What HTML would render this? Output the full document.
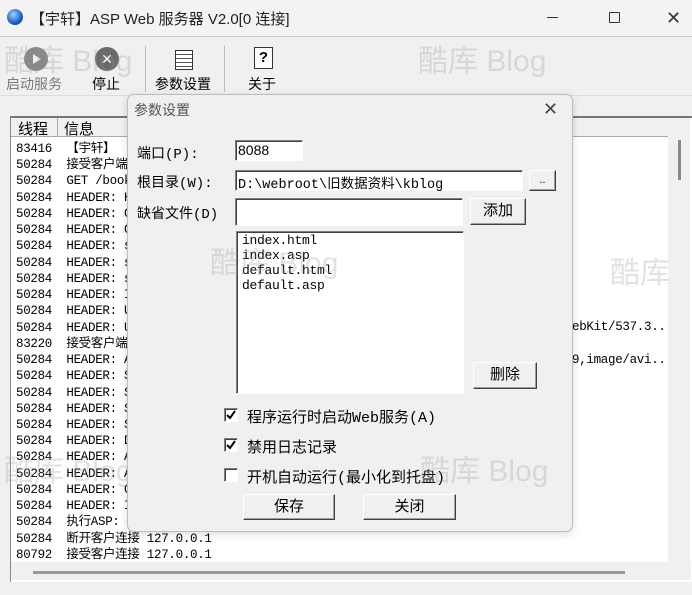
<!DOCTYPE html>
<html><head><meta charset="utf-8"><style>
*{margin:0;padding:0;box-sizing:border-box}
body{width:692px;height:595px;overflow:hidden;background:#f0f0f0;font-family:"Liberation Sans","Noto Sans CJK SC",sans-serif;position:relative;color:#000}
.a{position:absolute}
.tb{font-size:14px;white-space:nowrap}
.log{font-family:"Liberation Mono","Noto Sans CJK SC",monospace;font-size:12.5px;line-height:16.24px;white-space:pre;letter-spacing:-0.3px}
.btn{position:absolute;background:#f0f0f0;border:1px solid;border-color:#fff #404040 #404040 #fff;box-shadow:inset -1px -1px 0 #a0a0a0;font-size:14px;text-align:center}
.inp{position:absolute;background:#fff;border:1px solid;border-color:#808080 #fff #fff #808080;box-shadow:inset 1px 1px 0 #404040}
.lbl{position:absolute;font-size:14px;white-space:nowrap;font-family:"Liberation Mono","Noto Sans CJK SC",monospace}
.cb{position:absolute;width:14px;height:14px;background:#fff;border:1px solid;border-color:#808080 #fff #fff #808080;box-shadow:inset 1px 1px 0 #404040}
.wm{position:absolute;color:rgba(150,150,150,0.28);font-size:30px;white-space:nowrap}
</style></head><body>
<div class="a" style="left:0;top:0;width:692px;height:37px;background:#f3f3f3;border-bottom:1px solid #c8c8c8"></div>
<div class="a" style="left:7px;top:9px;width:16px;height:16px;border-radius:50%;background:radial-gradient(circle at 40% 35%,#9fd0ff,#1a5fc0 60%,#0a2a70)"></div>
<div class="a tb" style="left:30px;top:8px;font-size:15px;color:#222">【宇轩】ASP Web 服务器 V2.0[0 连接]</div>
<div class="a" style="left:547px;top:17px;width:11px;height:1px;background:#333"></div>
<div class="a" style="left:609px;top:12px;width:11px;height:11px;border:1px solid #333;border-radius:1px"></div>
<div class="a" style="left:666px;top:8px;font-size:18px;color:#333">✕</div>
<div class="a" style="left:24px;top:47px;width:24px;height:24px;border-radius:50%;background:#888"></div>
<div class="a" style="left:33px;top:54px;width:0;height:0;border-left:8px solid #eee;border-top:5px solid transparent;border-bottom:5px solid transparent"></div>
<div class="a tb" style="left:6px;top:74px;color:#7a7a7a">启动服务</div>
<div class="a" style="left:95px;top:47px;width:24px;height:24px;border-radius:50%;background:#6a6a6a;color:#fff;font-size:14px;text-align:center;line-height:24px">✕</div>
<div class="a tb" style="left:92px;top:74px">停止</div>
<div class="a" style="left:145px;top:46px;width:1px;height:46px;background:#bbb"></div>
<div class="a" style="left:175px;top:50px;width:18px;height:20px;border:1px solid #333;background:#fff;background-image:repeating-linear-gradient(#fff 0 3px,#555 3px 4px)"></div>
<div class="a tb" style="left:155px;top:74px">参数设置</div>
<div class="a" style="left:224px;top:46px;width:1px;height:46px;background:#bbb"></div>
<div class="a" style="left:254px;top:47px;width:19px;height:22px;border:1px solid #333;background:#fff;font-size:15px;font-weight:bold;text-align:center;line-height:20px">?</div>
<div class="a tb" style="left:248px;top:74px">关于</div>
<div class="a" style="left:0;top:95px;width:692px;height:1px;background:#ddd"></div>
<div class="a" style="left:10px;top:116px;width:682px;height:466px;border-top:2px solid #777;border-left:1px solid #888;background:#fff"></div>
<div class="a" style="left:11px;top:118px;width:657px;height:19px;background:#f0f0f0;border-bottom:1px solid #aaa"></div>
<div class="a" style="left:57px;top:118px;width:1px;height:19px;background:#aaa"></div>
<div class="a tb" style="left:18px;top:118px;font-size:15px">线程</div>
<div class="a tb" style="left:64px;top:118px;font-size:15px">信息</div>
<div class="a" style="left:668px;top:118px;width:22px;height:462px;background:#f0f0f0"></div>
<div class="a" style="left:678px;top:140px;width:3px;height:40px;background:#888"></div>
<div class="a" style="left:11px;top:562px;width:680px;height:18px;background:#f0f0f0"></div>
<div class="a" style="left:33px;top:571px;width:592px;height:3px;background:#999"></div>
<div class="a log" style="left:16px;top:141px">83416  【宇轩】
50284  接受客户端
50284  GET /book
50284  HEADER: H
50284  HEADER: C
50284  HEADER: C
50284  HEADER: s
50284  HEADER: s
50284  HEADER: s
50284  HEADER: I
50284  HEADER: U
50284  HEADER: U
83220  接受客户端
50284  HEADER: A
50284  HEADER: S
50284  HEADER: S
50284  HEADER: S
50284  HEADER: S
50284  HEADER: D
50284  HEADER: A
50284  HEADER: A
50284  HEADER: C
50284  HEADER: I
50284  执行ASP:
50284  断开客户连接 127.0.0.1
80792  接受客户连接 127.0.0.1</div>
<div class="a log" style="left:572px;top:319px">ebKit/537.3..</div>
<div class="a log" style="left:572px;top:352px">9,image/avi..</div>
<div class="wm" style="left:4px;top:36px">酷库 Blog</div>
<div class="wm" style="left:418px;top:36px">酷库 Blog</div>
<div class="wm" style="left:610px;top:248px">酷库</div>
<div class="wm" style="left:4px;top:446px">酷库 Blog</div>
<div class="a" style="left:127px;top:94px;width:446px;height:438px;background:#f0f0f0;border:1px solid #bdbdbd;border-radius:7px;box-shadow:0 2px 8px rgba(0,0,0,0.15)"></div>
<div class="a tb" style="left:134px;top:100px;color:#555">参数设置</div>
<div class="a" style="left:543px;top:99px;font-size:18px;color:#444">✕</div>
<div class="lbl" style="left:137px;top:143px">端口(P):</div>
<div class="inp" style="left:235px;top:140px;width:68px;height:21px"></div>
<div class="a" style="left:238px;top:142px;font-size:14px">8088</div>
<div class="lbl" style="left:137px;top:172px">根目录(W):</div>
<div class="inp" style="left:235px;top:170px;width:288px;height:21px"></div>
<div class="a lbl" style="left:238px;top:172px;font-size:13.5px">D:\webroot\旧数据资料\kblog</div>
<div class="btn" style="left:529px;top:170px;width:27px;height:21px;font-size:11px;line-height:18px">..</div>
<div class="lbl" style="left:137px;top:203px">缺省文件(D)</div>
<div class="inp" style="left:235px;top:198px;width:228px;height:28px"></div>
<div class="btn" style="left:470px;top:198px;width:56px;height:27px;line-height:24px;font-size:15px">添加</div>
<div class="inp" style="left:236px;top:231px;width:228px;height:163px"></div>
<div class="a log" style="left:242px;top:233px;font-size:13px;line-height:15px">index.html
index.asp
default.html
default.asp</div>
<div class="btn" style="left:473px;top:362px;width:64px;height:27px;line-height:24px;font-size:15px">删除</div>
<div class="cb" style="left:224px;top:408px"><svg width="12" height="12" style="position:absolute;left:0;top:0"><path d="M2 6 L5 9 L10 2" stroke="#000" stroke-width="2" fill="none"/></svg></div>
<div class="lbl" style="left:247px;top:406px;font-size:15px">程序运行时启动Web服务(A)</div>
<div class="cb" style="left:224px;top:438px"><svg width="12" height="12" style="position:absolute;left:0;top:0"><path d="M2 6 L5 9 L10 2" stroke="#000" stroke-width="2" fill="none"/></svg></div>
<div class="lbl" style="left:247px;top:436px;font-size:15px">禁用日志记录</div>
<div class="cb" style="left:224px;top:468px"></div>
<div class="lbl" style="left:247px;top:466px;font-size:15px">开机自动运行(最小化到托盘)</div>
<div class="btn" style="left:243px;top:494px;width:92px;height:26px;line-height:24px;font-size:15px">保存</div>
<div class="btn" style="left:363px;top:494px;width:93px;height:26px;line-height:24px;font-size:15px">关闭</div>
<div class="wm" style="left:210px;top:238px">酷库 Blog</div>
<div class="wm" style="left:420px;top:446px">酷库 Blog</div>
</body></html>
